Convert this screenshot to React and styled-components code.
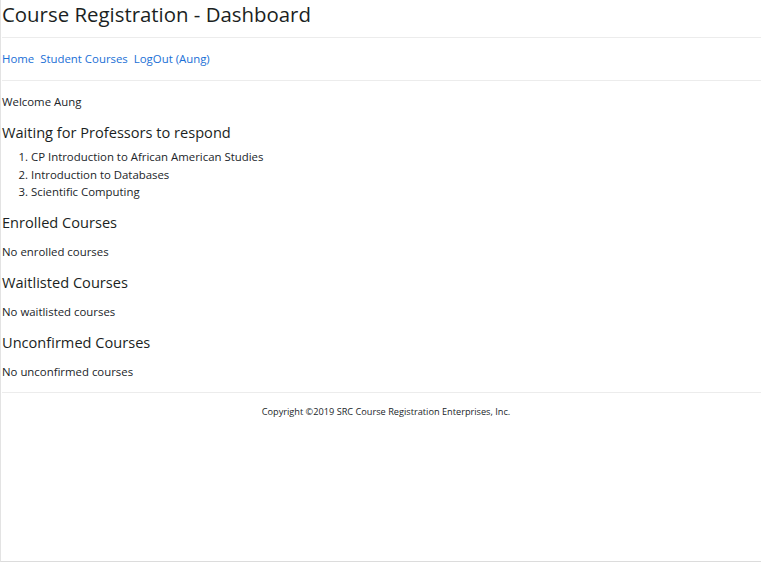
import React from 'react';
import styled, { createGlobalStyle } from 'styled-components';

const GlobalStyle = createGlobalStyle`
  html, body {
    margin: 0;
    padding: 0;
    background: #fff;
  }
  body {
    font-family: "Segoe UI", "Open Sans", "Noto Sans", sans-serif;
    font-size: 11.4px;
    color: #212529;
  }
`;

const waiting = [
  'CP Introduction to African American Studies',
  'Introduction to Databases',
  'Scientific Computing',
];

const sections = [
  { title: 'Enrolled Courses', empty: 'No enrolled courses' },
  { title: 'Waitlisted Courses', empty: 'No waitlisted courses' },
  { title: 'Unconfirmed Courses', empty: 'No unconfirmed courses' },
];

const App = () => {
  return (
    <Page>
      <GlobalStyle />
      <Title>Course Registration - Dashboard</Title>
      <Rule />
      <Nav>
        <NavLink href="#">Home</NavLink>
        <NavLink href="#">Student Courses</NavLink>
        <NavLink href="#">LogOut (Aung)</NavLink>
      </Nav>
      <Rule />
      <Main>
        <Text>Welcome Aung</Text>
        <Heading>Waiting for Professors to respond</Heading>
        <List>
          {waiting.map((c) => (
            <li key={c}>{c}</li>
          ))}
        </List>
        {sections.map((s) => (
          <React.Fragment key={s.title}>
            <Heading>{s.title}</Heading>
            <Text $gap>{s.empty}</Text>
          </React.Fragment>
        ))}
      </Main>
      <Rule />
      <Footer>Copyright ©2019 SRC Course Registration Enterprises, Inc.</Footer>
    </Page>
  );
};

const Page = styled.div`
  box-sizing: border-box;
  height: 562px;
  border-left: 1px solid #e3e3e3;
  border-bottom: 1px solid #dcdcdc;
  padding-left: 1px;
`;

const Title = styled.h1`
  margin: 0 0 10px;
  padding-top: 1px;
  font-size: 20.4px;
  font-weight: 500;
  line-height: 26px;
  color: #1b1f23;
`;

const Rule = styled.hr`
  margin: 0;
  border: 0;
  border-top: 1px solid #ececec;
`;

const Nav = styled.nav`
  display: flex;
  gap: 6px;
  padding: 11px 0 11px;
  line-height: 20px;
`;

const NavLink = styled.a`
  color: #1a6fd6;
  text-decoration: none;
`;

const Main = styled.main`
  padding: 12px 0 11px;
  display: flex;
  flex-direction: column;
`;

const Text = styled.p`
  margin: 0;
  line-height: 18px;
  margin-top: ${(p) => (p.$gap ? '11px' : '0')};
`;

const Heading = styled.h2`
  margin: 11px 0 0;
  font-size: 14.6px;
  font-weight: 500;
  line-height: 20px;
  color: #1b1f23;
`;

const List = styled.ol`
  margin: 6px 0 0;
  padding-left: 29px;
  line-height: 17.5px;
`;

const Footer = styled.footer`
  text-align: center;
  font-size: 9.2px;
  line-height: 14px;
  padding: 12px 0 0 9px;
`;

export default App;
